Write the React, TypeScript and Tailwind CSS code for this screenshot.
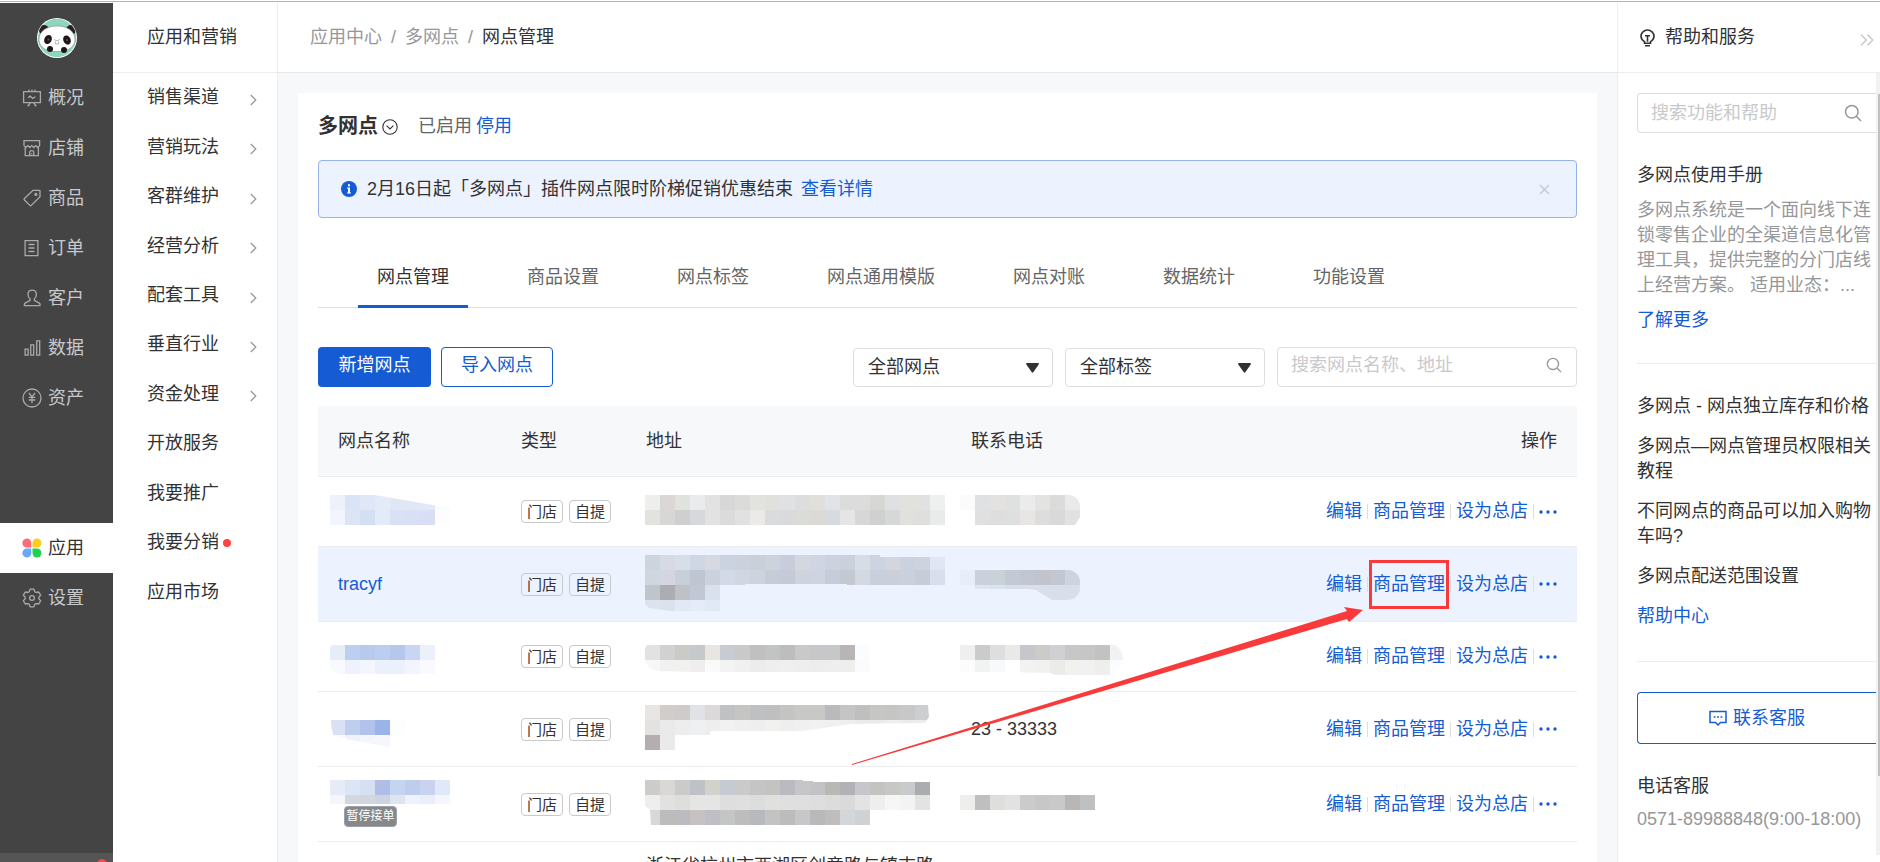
import type { ReactNode } from "react"
import clsx from "clsx"

type MosaicProps = {
  rows: string[][]
  className: string
  clip?: string
}

const CELL = 15

// Pixelated cover for private store data, "" leaves a cell empty
function Mosaic({ rows, className, clip }: MosaicProps) {
  const width = Math.max(...rows.map((r) => r.length)) * CELL
  const height = rows.length * CELL
  const id = clip ? `clip-${clip.replace(/[^0-9]/g, "")}` : undefined

  return (
    <svg className={clsx("absolute", className)} width={width} height={height} shapeRendering="crispEdges" aria-hidden="true">
      {clip && (
        <clipPath id={id}>
          <path d={clip} />
        </clipPath>
      )}
      <g clipPath={clip ? `url(#${id})` : undefined}>
        {rows.map((row, y) =>
          row.map((color, x) =>
            color ? <rect key={`${x}-${y}`} x={x * CELL} y={y * CELL} width={CELL} height={CELL} fill={`#${color}`} /> : null
          )
        )}
      </g>
    </svg>
  )
}

const c = (s: string) => s.split(" ").map((v) => (v === "-" ? "" : v))

function SideIcon({ children }: { children: ReactNode }) {
  return (
    <svg className="w-5 h-5 shrink-0" viewBox="0 0 20 20" fill="none" stroke="currentColor" strokeWidth="1.3">
      {children}
    </svg>
  )
}

const mainNav = [
  {
    label: "概况",
    icon: (
      <SideIcon>
        <path d="M1.6 3.6h16.8v11H1.6zM7 1.5v2M10 1.5v2M13 1.5v2M8.5 14.6l-2.8 3.6M11.5 14.6l2.8 3.6M5.5 17.6h2M12.5 17.6h2M6 9.8l2.2-1.6 2.6 2.2 2.6-1.6" />
      </SideIcon>
    )
  },
  {
    label: "店铺",
    icon: (
      <SideIcon>
        <path d="M2 2.6h15.600v5l-1.900 1.900-1.900-1.900-2 1.900-2-1.900-2 1.900-1.900-1.900-2 1.900L2 7.600zM3.200 9.500v8.100h13.200V9.500M7.600 17.600v-2.800c0-1.200.9-2.100 2.100-2.100s2.100.9 2.100 2.100v2.800M9.700 15.200v1.200" />
      </SideIcon>
    )
  },
  {
    label: "商品",
    icon: (
      <SideIcon>
        <path d="M11 2.3h6.500c.3 0 .5.2.5.5v5.900l-8.700 8.700c-.5.5-1 .5-1.500 0l-5.400-5.400c-.5-.5-.5-1 0-1.500z" />
        <circle cx="13.9" cy="6.4" r="0.900" fill="currentColor" />
      </SideIcon>
    )
  },
  {
    label: "订单",
    icon: (
      <SideIcon>
        <path d="M3.100 2.600h12.800v15H3.100zM6.500 6.500h6M6.500 10h6M6.500 13.500h6" />
      </SideIcon>
    )
  },
  {
    label: "客户",
    icon: (
      <SideIcon>
        <path d="M10.200 2.1c-2.600 0-4.200 1.800-4.200 4.300 0 2 .9 3.400 2.100 4.400v1.600l-5 2.700c-.5.3-.7.8-.7 1.400v1.100h15.600v-1.100c0-.6-.2-1.100-.7-1.400l-5-2.700v-1.600c1.200-1 2.100-2.400 2.100-4.400 0-2.500-1.600-4.300-4.200-4.300z" />
      </SideIcon>
    )
  },
  {
    label: "数据",
    icon: (
      <SideIcon>
        <path d="M3.1 11.2h3v6h-3zM8.7 6.9h3v10.300h-3zM14.7 2.9h3v14.300h-3z" />
      </SideIcon>
    )
  },
  {
    label: "资产",
    icon: (
      <SideIcon>
        <circle cx="10" cy="10" r="9" />
        <path d="M6.9 4.9l3.100 4 3.100-4M6.700 9.300h6.600M6.700 12h6.600M10 8.900v6.300" />
      </SideIcon>
    )
  }
]

const subNav = [
  { label: "销售渠道", arrow: true },
  { label: "营销玩法", arrow: true },
  { label: "客群维护", arrow: true },
  { label: "经营分析", arrow: true },
  { label: "配套工具", arrow: true },
  { label: "垂直行业", arrow: true },
  { label: "资金处理", arrow: true },
  { label: "开放服务" },
  { label: "我要推广" },
  { label: "我要分销", dot: true },
  { label: "应用市场" }
]

const tabs = ["网点管理", "商品设置", "网点标签", "网点通用模版", "网点对账", "数据统计", "功能设置"]

const stores = [
  {
    id: 1,
    height: "h-[70px]",
    name: (
      <Mosaic
        className="left-3 top-[18px]"
        rows={[c("edf1fa dae4f7 e0e7f6 e3eaf8 dfe6f5 e0e7f6 e2e8f7 fafbff"), c("f2f5fe dde5f5 d3dff3 e3ebfa d9e1f5 d9dff4 d8dff5 fdfdff")]}
        clip="M0 0H45L120 13V30H0z"
      />
    ),
    address: (
      <Mosaic
        className="-left-px top-[18px]"
        rows={[
          c("eeeeec dbd7d6 e1e1de e9ebec e2e2e3 d7d7d7 dbdbda e2e2df e0e1dd dfe1e3 dddddd e0dfdc e1e3e6 dcdcdc dcdcdc d7d7d6 dee0e2 e1e2de e1e1e1 eef0ef"),
          c("e2e2df d7d7d5 cfcfcf d6d8db e2e2e2 dbdbdb e1e1e2 ebeae8 d9dbdd d9dad9 dadcd8 dcdad6 d7dae0 e5e5e5 d5d8d6 d0d0d0 d6d8d7 e0e1dd dfdfdd e9ebea")
        ]}
      />
    ),
    phone: (
      <Mosaic
        className="-left-[11px] top-[18px]"
        rows={[c("fbfbfb dfe1e3 e4e2e1 dee1e0 ebebeb e3e3e1 dbdbdb e9eaec"), c("- e0e0e0 dedede dde0df e8e6e4 dddddd d9d9d9 e0e1e3")]}
        clip="M0 0H110Q120 2 120 12V22L115 30H0z"
      />
    )
  },
  {
    id: 2,
    height: "h-[75px]",
    highlighted: true,
    name: "tracyf",
    address: (
      <Mosaic
        className="-left-px top-2"
        rows={[
          c("ccd4de d6dae4 d6dee9 d0d7e4 d6d9e2 cbd2e0 cbd2de c9d0da ccd3dc c9ccda d4d6e0 d0d5e3 ccd2de cad0dc d6dde7 cdd4e0 d3d6df cbd2df ced3de e0e6f3"),
          c("cfd6df d3d6df c7cfd9 bfc6d2 cbd2de d3d9e7 d0d6e2 cdd3df c7cdd6 c4cad7 cdd3df cfd5e0 c6ccd9 c4c8d1 d4d8e3 c9cfdc cbcfd9 cad1dc c6cdd8 d8deeb"),
          c("bec5cd abadb2 bfc1c7 c0c7d5 dae1ee"),
          c("dbe3ef dae2ec e2e9f5 e5ebf8 e2e8f4")
        ]}
        clip="M0 0H235V2H300V30H202V29H100V30H75V56H25L4 53L0 49z"
      />
    ),
    phone: (
      <Mosaic
        className="-left-[11px] top-[23px]"
        rows={[c("e8eef9 cad1dc c9d1d9 c3c9d5 c1c6d2 c1c4cd c3c7d1 cdd4df"), c("- dfe5f0 dce2ed d8deea d8dfea d8dfeb d9dfea d8dfea")]}
        clip="M0 0H110Q120 3 120 12V20Q118 30 106 30H92L76 20L68 19H0z"
      />
    )
  },
  {
    id: 3,
    height: "h-[70px]",
    name: (
      <Mosaic
        className="left-3 top-[23px]"
        rows={[c("e6ecf8 bdcff0 b7c9ed bbcef0 b5c7ed c8d5f3 ecf0fa"), c("f8faff edf2fc f3f6fd ebf1fb ebf0fb f2f5fd f8faff")]}
        clip="M2 0H105V30L98 29H12Q2 28 0 20V3z"
      />
    ),
    address: (
      <Mosaic
        className="-left-px top-[23px]"
        rows={[
          c("e2e2e2 d1d1d1 cbcbc6 c6c9cc e9e6e1 c8cbd1 c9c9c9 c0c0c0 c2c4c3 bcbdbf c9c9c9 c8c6cb c6c8c7 b9b5b7 fafcff"),
          c("f7f7f7 f1f1f1 f1f1ef eeeeee fafafa f3f3f3 f0f0f0 ececec eeeeee efefef eeeeee ededed eeeeee eeeeec fbfbfd")
        ]}
        clip="M2 0H225V27H50L12 26Q2 23 0 16V3z"
      />
    ),
    phone: (
      <Mosaic
        className="-left-[11px] top-[23px]"
        rows={[c("efefef cbcbcb dcdfde ebe9e7 c6c7ca cbcbc9 cfd0d3 c7c7c7 c6c6c5 c2c2c2 f1f2f3"), c("fcfcfc f0f3f1 f8f9fa - f2f2f1 f1f2f0 ebebea f1f1ee f0f2f1 eeeeec fbfcfd")]}
        clip="M0 0H155Q163 5 163 15Q158 27 150 30H96L90 28L45 27H0z"
      />
    )
  },
  {
    id: 4,
    height: "h-[75px]",
    name: (
      <Mosaic className="left-3 top-[28px]" rows={[c("dae1f5 becfed b2c2eb 9ab3e8 fcfdfd"), c("f8faff f0f3fb f4f6fc f5f7fd")]} clip="M1 0H75V15H60V27L20 20L4 16Q1 10 1 0z" />
    ),
    address: (
      <Mosaic
        className="-left-px top-[13px]"
        rows={[
          c("e7e6e5 d0cdcb cecbca e0e2e7 dbd9da bfc1c2 c5c5c4 bfc0c1 bfbfc0 c4c4c3 c8c9c5 c8c8c7 b9babc c5c5c5 bfc0bd c6c6c5 c5c5c4 c8c8c8 cdced0"),
          c("e3e2e1 eaeaea ededed eff0f2 eeeeee f1f1f1 efefef eeeeee f1f1ef eeeeee f0f0f0 f1f1f1 f0f0f0 eeeeee ebebeb ebebeb efefef ececec ecedef"),
          c("b4aeb0 eaeaeb")
        ]}
        clip="M0 0H283L284 12L280 18L205 19L158 26H65V30H30V45H0z"
      />
    ),
    phone: "23 - 33333"
  },
  {
    id: 5,
    height: "h-[75px]",
    name: (
      <>
        <Mosaic
          className="left-3 top-[13px]"
          rows={[c("e7ebf7 dae6f7 d7dff3 afbde7 c5d5f0 becdee c9d3f0 dfe9fa"), c("f4f6fc d3d7df d3d6dd cdd3df dee5f0 eef2fd e9eefa f5f7fd")]}
          clip="M0 0H120V24H0z"
        />
        <span className="absolute left-[26px] top-[39px] h-[21px] w-[53px] rounded-sm border border-gray-400 bg-[#888] text-center text-[12px] leading-[19px] text-white">
          暂停接单
        </span>
      </>
    ),
    address: (
      <Mosaic
        className="-left-px top-[13px]"
        rows={[
          c("cccdca dad8d4 cbccca bec1c5 d2d1cc c7cad0 cacaca c4c5c4 c3c4c1 babac0 c6c6c8 c2c3c4 b8b8b5 b1b1b6 c7c7cb c3c3c1 c7c7c4 c8cacb abacaf"),
          c("eeeeec e1e1e1 dededd e5e5e4 e5e5e5 dedede dfdfdf dcdddd e0e0df dedfde dfdfdf dedede dcdcdc dadadb e3e3e3 eeeeee f6f6f4 f3f3f3 e3e3e4"),
          c("d6d9d8 bcbcba bbbbc0 c6c2c1 bebec5 c3c6c4 bdbdbd b7b9bc c3c3c2 bdbbbb c7c7c9 b9b9bb bfbdbd d5d6d9 cfd2d3")
        ]}
        clip="M0 0H158V1H168V2H285V30H225V45H6L5 30L0 26z"
      />
    ),
    phone: (
      <Mosaic className="-left-[11px] top-[28px]" rows={[c("eeeeed bfbfbf dededd e2e2e2 cbcbcd c7c7c7 c8c9ca b9b7b5 bfc0c2")]} />
    )
  },
  {
    id: 6,
    height: "h-[75px]",
    name: "",
    address: "浙江省杭州市西湖区创意路与镇吉路",
    phone: ""
  }
]

const helpLinks = ["多网点 - 网点独立库存和价格", "多网点—网点管理员权限相关教程", "不同网点的商品可以加入购物车吗?", "多网点配送范围设置"]

function SearchIcon({ className }: { className: string }) {
  return (
    <svg className={className} viewBox="0 0 18 18" fill="none" stroke="currentColor" strokeWidth="1.5">
      <circle cx="7.8" cy="7.8" r="6.3" />
      <path d="M12.3 12.3l4.700 4.700" />
    </svg>
  )
}

function FilterSelect({ label }: { label: string }) {
  return (
    <div className="relative">
      <select aria-label={label} className="h-[39px] w-[200px] appearance-none rounded-sm border border-[#dcdee0] bg-white pl-[14px] pr-8 text-[#323233] outline-none">
        <option>{label}</option>
      </select>
      <svg className="pointer-events-none absolute right-[14px] top-[15px] h-[10px] w-[13px]" viewBox="0 0 13 10" fill="#323233">
        <path d="M1 0h11c1 0 1.200.8.7 1.500L7.300 9.300c-.4.6-1.100.6-1.500 0L.3 1.500C-.2.800.1 0 1 0z" />
      </svg>
    </div>
  )
}

function PandaLogo() {
  return (
    <svg className="h-10 w-10" viewBox="0 0 40 40">
      <clipPath id="panda-clip">
        <circle cx="20" cy="20" r="19.5" />
      </clipPath>
      <circle cx="20" cy="20" r="20" fill="#fff" />
      <g clipPath="url(#panda-clip)">
        <circle cx="20" cy="20" r="19.2" fill="#8ed6bd" />
        <circle cx="7" cy="12" r="5" fill="#2a1e1e" />
        <circle cx="34" cy="12" r="5" fill="#2a1e1e" />
        <path d="M20 8c10 0 18 5 18 13.500 0 7-6 12-18 12S2 28.500 2 21.500C2 13 10 8 20 8z" fill="#fff" stroke="#777" strokeWidth="0.5" />
        <ellipse cx="11" cy="21.5" rx="3.600" ry="4.700" transform="rotate(28 11 21.5)" fill="#1f1717" />
        <ellipse cx="30" cy="22" rx="3.600" ry="4.700" transform="rotate(-28 30 22)" fill="#1f1717" />
        <circle cx="11.5" cy="21.5" r="1.100" fill="#555" />
        <circle cx="30" cy="22" r="1.100" fill="#555" />
        <path d="M17 21.500l3 1.300 3-1.300M18.500 23.500v2.500h3v-2.500" fill="none" stroke="#999" strokeWidth="0.7" />
        <circle cx="13" cy="31" r="3" fill="#1f1717" />
        <circle cx="27" cy="32" r="3" fill="#1f1717" />
      </g>
    </svg>
  )
}

export default function App() {
  return (
    <div className="flex h-screen flex-col overflow-hidden bg-white font-['Liberation_Sans','Noto_Sans_CJK_SC',sans-serif] text-[18px] leading-[25px] text-[#323233]">
      <div className="my-px h-px shrink-0 bg-[#b4b4b4]" />

      <div className="flex min-h-0 flex-1">
        {/* Main menu */}
        <aside className="flex w-[113px] shrink-0 flex-col bg-[#444] text-[#c8c9cc]">
          <div className="flex h-[70px] shrink-0 items-center justify-center">
            <PandaLogo />
          </div>
          <nav className="flex flex-1 flex-col">
            {mainNav.map((item) => (
              <a key={item.label} href="#" className="flex h-[50px] items-center gap-1.5 pl-[22px]">
                <span className="text-[#aaa]">{item.icon}</span>
                {item.label}
              </a>
            ))}
            <a href="#" className="mt-[100px] flex h-[50px] items-center gap-1.5 bg-white pl-[22px] text-[#323233]">
              <svg className="h-5 w-5" viewBox="0 0 20 20">
                <path d="M4.700 .5A4.500 4.500 0 0 1 9.300 5v4.500H5A4.500 4.500 0 0 1 4.700 .5z" fill="#ff6b74" />
                <path d="M15 .5A4.500 4.500 0 0 0 10.500 5v4.500H15A4.500 4.500 0 0 0 15 .5z" fill="#ffcc1a" />
                <path d="M4.700 19.500A4.500 4.500 0 0 0 9.300 15v-4.500H5A4.500 4.500 0 0 0 4.700 19.500z" fill="#66a9ff" />
                <path d="M15 19.500A4.500 4.500 0 0 1 10.500 15v-4.500H15A4.500 4.500 0 0 1 15 19.500z" fill="#1fd14f" />
              </svg>
              应用
            </a>
            <a href="#" className="flex h-[50px] items-center gap-1.5 pl-[22px]">
              <span className="text-[#aaa]">
                <SideIcon>
                  <path d="M8.100 1.200h3.800l.8 2.400 1.500.9 2.500-.5 1.900 3.200-1.700 1.900v1.800l1.700 1.900-1.900 3.200-2.500-.5-1.500.9-.8 2.400H8.100l-.8-2.400-1.500-.9-2.500.5-1.900-3.200 1.700-1.900V9.100L1.400 7.200 3.300 4l2.500.5 1.500-.9z" strokeLinejoin="round" />
                  <circle cx="10" cy="10" r="2.400" />
                </SideIcon>
              </span>
              设置
            </a>
          </nav>
          <div className="relative h-[9px] shrink-0 overflow-hidden bg-[#555]">
            <span className="absolute right-[6px] top-[6px] h-[10px] w-[10px] rounded-full bg-[#ff4444]" />
          </div>
        </aside>

        {/* Second level menu */}
        <aside className="w-[165px] shrink-0 border-r border-[#ebedf0]">
          <h2 className="flex h-[70px] items-center border-b border-[#ebedf0] pl-[34px]">应用和营销</h2>
          <nav className="grid h-[544px] grid-rows-11">
            {subNav.map((item) => (
              <a key={item.label} href="#" className="flex items-center pl-[34px] pr-5">
                {item.label}
                {item.dot && <span className="ml-1 h-2 w-2 rounded-full bg-[#ff4444]" />}
                {item.arrow && (
                  <svg className="ml-auto mt-1 h-3 w-[7px]" viewBox="0 0 7 12" fill="none" stroke="#969799" strokeWidth="1.2">
                    <path d="M.8 1l5 5-5 5" />
                  </svg>
                )}
              </a>
            ))}
          </nav>
        </aside>

        {/* Content */}
        <main className="flex min-w-0 flex-1 flex-col bg-[#f7f8fa]">
          <div className="flex h-[70px] shrink-0 items-center gap-[9px] border-b border-[#e5e7ea] bg-white pl-8 text-[#969799]">
            <a href="#">应用中心</a>
            <span>/</span>
            <a href="#">多网点</a>
            <span>/</span>
            <span className="text-[#323233]">网点管理</span>
          </div>

          <div className="mx-5 mt-5 flex-1 overflow-hidden bg-white px-5">
            <div className="flex h-[67px] items-center">
              <h1 className="text-[20px] font-bold">多网点</h1>
              <svg className="ml-1 h-4 w-4" viewBox="0 0 16 16" fill="none" stroke="#323233" strokeWidth="1.1">
                <circle cx="8" cy="8" r="7.2" />
                <path d="M4.600 6.700L8 10l3.400-3.300" />
              </svg>
              <span className="ml-5 text-[#646566]">已启用</span>
              <a href="#" className="ml-1 text-[#155bd4]">停用</a>
            </div>

            <div className="flex h-[58px] items-center rounded-sm border border-[#95b3ea] bg-[#ecf3ff] pl-[22px] pr-6">
              <svg className="h-4 w-4" viewBox="0 0 16 16">
                <circle cx="8" cy="8" r="8" fill="#155bd4" />
                <path d="M7 3.200h2v2H7zM6 6.600h3v5h1v1H6v-1h1v-4H6z" fill="#fff" />
              </svg>
              <p className="ml-2.5">2月16日起「多网点」插件网点限时阶梯促销优惠结束</p>
              <a href="#" className="ml-2 text-[#155bd4]">查看详情</a>
              <button type="button" aria-label="关闭" className="ml-auto p-0.5">
                <svg className="h-[11px] w-[11px]" viewBox="0 0 11 11" stroke="#c8c9cc" strokeWidth="1.5">
                  <path d="M1 1l9 9M10 1l-9 9" />
                </svg>
              </button>
            </div>

            <nav className="mt-7 flex h-[62px] gap-10 border-b border-[#dcdee0] pl-10">
              {tabs.map((tab, i) => (
                <a
                  key={tab}
                  href="#"
                  className={clsx(
                    "flex h-[62px] items-center border-y-[3px] border-t-transparent px-[19px]",
                    i === 0 ? "border-b-[#155bd4] text-[#323233]" : "border-b-transparent text-[#646566]"
                  )}
                >
                  {tab}
                </a>
              ))}
            </nav>

            <div className="mt-[39px] flex items-end">
              <button type="button" className="h-10 w-[113px] rounded-sm bg-[#155bd4] pb-1 text-white">新增网点</button>
              <button type="button" className="ml-2.5 h-10 w-[112px] rounded-sm border border-[#155bd4] pb-1 text-[#155bd4]">导入网点</button>
              <div className="ml-auto flex items-end gap-3">
                <FilterSelect label="全部网点" />
                <FilterSelect label="全部标签" />
                <label className="flex h-10 w-[300px] items-center rounded-sm border border-[#dcdee0] pb-1 pl-[13px] pr-[14px]">
                  <input type="text" placeholder="搜索网点名称、地址" className="min-w-0 flex-1 outline-none placeholder:text-[#c8c9cc]" />
                  <SearchIcon className="h-4 w-4 text-[#969799]" />
                </label>
              </div>
            </div>

            <div className="relative mt-[19px]">
              <table className="w-full table-fixed border-separate border-spacing-0">
                <thead>
                  <tr className="h-[71px] bg-[#f7f8fa] text-left">
                    <th className="w-[203px] border-b border-[#ebedf0] pl-5 font-normal">网点名称</th>
                    <th className="w-[125px] border-b border-[#ebedf0] font-normal">类型</th>
                    <th className="w-[325px] border-b border-[#ebedf0] font-normal">地址</th>
                    <th className="border-b border-[#ebedf0] font-normal">联系电话</th>
                    <th className="w-[300px] border-b border-[#ebedf0] pr-5 text-right font-normal">操作</th>
                  </tr>
                </thead>
                <tbody>
                  {stores.map((store) => (
                    <tr key={store.id} className={clsx(store.height, store.highlighted && "bg-[#ecf3ff]")}>
                      <td className="relative border-b border-[#ebedf0] pl-5 text-[#155bd4]">{store.name}</td>
                      <td className="border-b border-[#ebedf0]">
                        {store.id < 6 && (
                          <div className="flex gap-1.5 text-[15px] leading-[21px]">
                            <span className="rounded-sm border border-[#c8c9cc] px-[5px]">门店</span>
                            <span className="rounded-sm border border-[#c8c9cc] px-[5px]">自提</span>
                          </div>
                        )}
                      </td>
                      <td className={clsx("relative border-b border-[#ebedf0]", store.id === 6 && "pt-3 align-top")}>{store.address}</td>
                      <td className="relative border-b border-[#ebedf0]">{store.phone}</td>
                      <td className="border-b border-[#ebedf0] pr-5">
                        {store.id < 6 && (
                          <div className="flex items-center justify-end text-[#155bd4]">
                            <a href="#">编辑</a>
                            <span className="mx-[5px] h-[15px] w-px bg-[#dcdee0]" />
                            <a href="#" className="relative">
                              商品管理
                              {store.highlighted && <span className="absolute -inset-x-1 -inset-y-3 border-[3px] border-[#fa3a3a]" />}
                            </a>
                            <span className="mx-[5px] h-[15px] w-px bg-[#dcdee0]" />
                            <a href="#">设为总店</a>
                            <span className="mx-[5px] h-[15px] w-px bg-[#dcdee0]" />
                            <button type="button" aria-label="更多">
                              <svg className="h-1 w-[18px]" viewBox="0 0 18 4" fill="currentColor">
                                <circle cx="2" cy="2" r="1.7" />
                                <circle cx="9" cy="2" r="1.7" />
                                <circle cx="16" cy="2" r="1.7" />
                              </svg>
                            </button>
                          </div>
                        )}
                      </td>
                    </tr>
                  ))}
                </tbody>
              </table>
              <svg className="pointer-events-none absolute right-[213px] top-[199px]" width="514" height="162" viewBox="0 0 514 162" fill="#fa3a3a" aria-hidden="true">
                <path d="M2 159L497 6L494 2L513 5L499 17L497 14L2 160z" />
              </svg>
            </div>
          </div>
        </main>

        {/* Help panel */}
        <aside className="flex w-[263px] shrink-0 flex-col border-l border-[#ebedf0]">
          <div className="flex h-[70px] shrink-0 items-center border-b border-[#ebedf0] pl-[22px] pr-1.5">
            <svg className="h-[18px] w-[15px]" viewBox="0 0 15 18" fill="none" stroke="#323233" strokeWidth="1.6">
              <path d="M4.500 12.600C2.500 11.500 1 9.700 1 7.300A6.400 6.400 0 0 1 7.500 1 6.400 6.400 0 0 1 14 7.300c0 2.400-1.500 4.200-3.500 5.300v1.600h-6zM5 6.700h5M7.500 6.700v6M5 16.800h5" />
            </svg>
            <h2 className="ml-2.5">帮助和服务</h2>
            <button type="button" aria-label="收起" className="ml-auto">
              <svg className="mt-1 h-3 w-[14px]" viewBox="0 0 14 12" fill="none" stroke="#c8c9cc" strokeWidth="1.5">
                <path d="M1 .7L6.300 6 1 11.300M7.500 .7L12.800 6l-5.300 5.300" />
              </svg>
            </button>
          </div>

          <div className="flex min-h-0 flex-1">
            <div className="min-w-0 flex-1 overflow-hidden pl-[19px] pt-5">
              <label className="flex h-10 items-center rounded-l-sm border border-r-0 border-[#dcdee0] pl-[13px] pr-[14px]">
                <input type="text" placeholder="搜索功能和帮助" className="min-w-0 flex-1 outline-none placeholder:text-[#c8c9cc]" />
                <SearchIcon className="h-[18px] w-[18px] text-[#969799]" />
              </label>

              <section className="mt-[30px] border-b border-[#ebedf0] pb-[30px]">
                <h3>多网点使用手册</h3>
                <p className="mt-2.5 pr-1 text-[#969799]">
                  多网点系统是一个面向线下连锁零售企业的全渠道信息化管理工具，提供完整的分门店线上经营方案。 适用业态：...
                </p>
                <a href="#" className="mt-2.5 block text-[#155bd4]">了解更多</a>
              </section>

              <section className="mt-[30px] border-b border-[#ebedf0] pb-8">
                <ul className="flex flex-col gap-[15px] pr-1">
                  {helpLinks.map((link) => (
                    <li key={link}>
                      <a href="#" className="block">{link}</a>
                    </li>
                  ))}
                  <li>
                    <a href="#" className="block text-[#155bd4]">帮助中心</a>
                  </li>
                </ul>
              </section>

              <button type="button" className="mt-[30px] flex h-[52px] w-full items-center justify-center gap-1.5 rounded-l-sm border border-r-0 border-[#155bd4] text-[#155bd4]">
                <svg className="h-4 w-[18px]" viewBox="0 0 18 16" fill="none" stroke="currentColor" strokeWidth="1.5">
                  <path d="M1 1.500h16v11h-5.500L9 15l-2.500-2.500H1z" />
                  <path d="M4.700 7h1.800M8.100 7h1.800M11.500 7h1.800" />
                </svg>
                联系客服
              </button>

              <h3 className="mt-[30px]">电话客服</h3>
              <p className="mt-2 text-[#969799]">0571-89988848(9:00-18:00)</p>
            </div>
            <div className="mb-[7px] w-1 shrink-0 bg-[#f1f1f1] pl-0.5 pt-[21px]">
              <div className="h-[682px] bg-[#c1c1c1]" />
            </div>
          </div>
        </aside>
      </div>
    </div>
  )
}
